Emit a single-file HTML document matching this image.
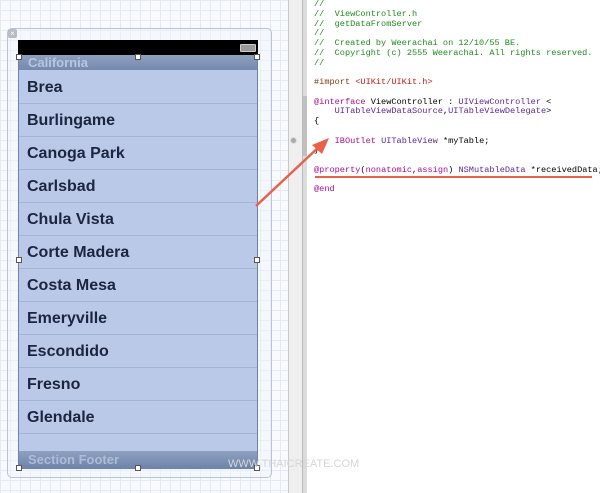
<!DOCTYPE html>
<html><head><style>
body{margin:0;width:600px;height:493px;overflow:hidden;position:relative;background:#fff;font-family:"Liberation Sans",sans-serif}
.grid{position:absolute;left:0;top:0;width:288px;height:493px;background-color:#f8fafd;
background-image:linear-gradient(#e3eaf4 1px,transparent 1px),linear-gradient(90deg,#e3eaf4 1px,transparent 1px),linear-gradient(#cfdcee 1px,transparent 1px),linear-gradient(90deg,#cfdcee 1px,transparent 1px);
background-size:10px 10px,10px 10px,50px 50px,50px 50px}
.gut{position:absolute;left:288px;top:0;width:14px;height:493px;background:#efefef;border-left:1px solid #c8c8c8}
.gut2{position:absolute;left:302px;top:0;width:4px;height:493px;background:#dcdcdc;border-left:1px solid #bbb}
.frame{position:absolute;left:7px;top:28px;width:263px;height:448px;border:1px solid #b8c4d6;border-radius:5px;background:rgba(240,244,250,.5)}
.x{position:absolute;left:8px;top:29px;width:9px;height:9px;background:#b5bcc6;border-radius:2px;color:#fff;font-size:8px;line-height:9px;text-align:center}
.status{position:absolute;left:18px;top:40px;width:240px;height:15px;background:#000}
.bat{position:absolute;left:240px;top:44px;width:14px;height:6px;border:1px solid #ccc;background:#999;border-radius:1px}
.table{position:absolute;left:18px;top:55px;width:238px;height:413px;background:#b9c9e7;border:1px solid #6d82a6;border-top:none}
.hdr{position:absolute;left:0;top:0;width:238px;height:15px;background:linear-gradient(#8fa1c0,#7489ad);color:#b8c6de;font-weight:bold;font-size:13px;line-height:15px;padding-left:9px;box-sizing:border-box}
.row{position:absolute;left:0;width:238px;height:33px;border-bottom:1px solid #a4b5d4;font-weight:bold;font-size:16px;color:#1b2540;line-height:34px;padding-left:8px;box-sizing:border-box}
.ftr{position:absolute;left:0;top:396px;width:238px;height:17px;background:linear-gradient(#8fa1c0,#6e84aa);color:#aebcd6;font-weight:bold;font-size:13px;line-height:17px;padding-left:9px;box-sizing:border-box}
.h{position:absolute;width:4px;height:4px;background:#fff;border:1px solid #555}
pre{position:absolute;left:314px;top:0px;margin:0;font-family:"Liberation Mono",monospace;font-size:8.6px;line-height:9.75px;color:#000}
.c{color:#1e8a1e}.p{color:#7a3b10}.s{color:#c41a16}.k{color:#aa0d91}.t{color:#5c2699}
.bar{position:absolute;left:303px;top:96px;width:4px;height:60px;background:#c0c0c0}
.wm{position:absolute;left:228px;top:458px;font-size:11px;color:#d6d6d6;letter-spacing:0}
</style></head><body>
<div class="grid"></div>
<div class="gut"></div><div class="gut2"></div><div class="bar"></div>
<div style="position:absolute;left:290px;top:137px;width:5px;height:5px;border-radius:50%;background:#aaa;border:1px solid #ddd"></div>
<div class="frame"></div><div class="x">×</div>
<div class="status"></div><div class="bat"></div>
<div class="table">
<div class="hdr">California</div>
<div class="row" style="top:16px">Brea</div>
<div class="row" style="top:49px">Burlingame</div>
<div class="row" style="top:82px">Canoga Park</div>
<div class="row" style="top:115px">Carlsbad</div>
<div class="row" style="top:148px">Chula Vista</div>
<div class="row" style="top:181px">Corte Madera</div>
<div class="row" style="top:214px">Costa Mesa</div>
<div class="row" style="top:247px">Emeryville</div>
<div class="row" style="top:280px">Escondido</div>
<div class="row" style="top:313px">Fresno</div>
<div class="row" style="top:346px">Glendale</div>
<div class="ftr">Section Footer</div>
</div>
<div class="h" style="left:16px;top:54px"></div><div class="h" style="left:135px;top:54px"></div><div class="h" style="left:254px;top:54px"></div>
<div class="h" style="left:16px;top:257px"></div><div class="h" style="left:254px;top:257px"></div>
<div class="h" style="left:16px;top:465px"></div><div class="h" style="left:135px;top:465px"></div><div class="h" style="left:254px;top:465px"></div>
<div class="wm">WWW.THAICREATE.COM</div>
<pre><span class="c">//
//  ViewController.h
//  getDataFromServer
//
//  Created by Weerachai on 12/10/55 BE.
//  Copyright (c) 2555 Weerachai. All rights reserved.
//</span>

<span class="p">#import </span><span class="s">&lt;UIKit/UIKit.h&gt;</span>

<span class="k">@interface</span> ViewController : <span class="t">UIViewController</span> &lt;
    <span class="t">UITableViewDataSource</span>,<span class="t">UITableViewDelegate</span>&gt;
{

    <span class="k">IBOutlet</span> <span class="t">UITableView</span> *myTable;
}

<span class="k">@property</span>(<span class="k">nonatomic</span>,<span class="k">assign</span>) <span class="t">NSMutableData</span> *receivedData;

<span class="k">@end</span></pre>
<svg style="position:absolute;left:0;top:0" width="600" height="493">
<line x1="256" y1="206" x2="322" y2="144" stroke="#e8614a" stroke-width="2.5"/>
<polygon points="329,138 312,145 322,154" fill="#e8614a"/>
<line x1="315" y1="177" x2="592" y2="177" stroke="#e8614a" stroke-width="2"/>
</svg>
</body></html>
